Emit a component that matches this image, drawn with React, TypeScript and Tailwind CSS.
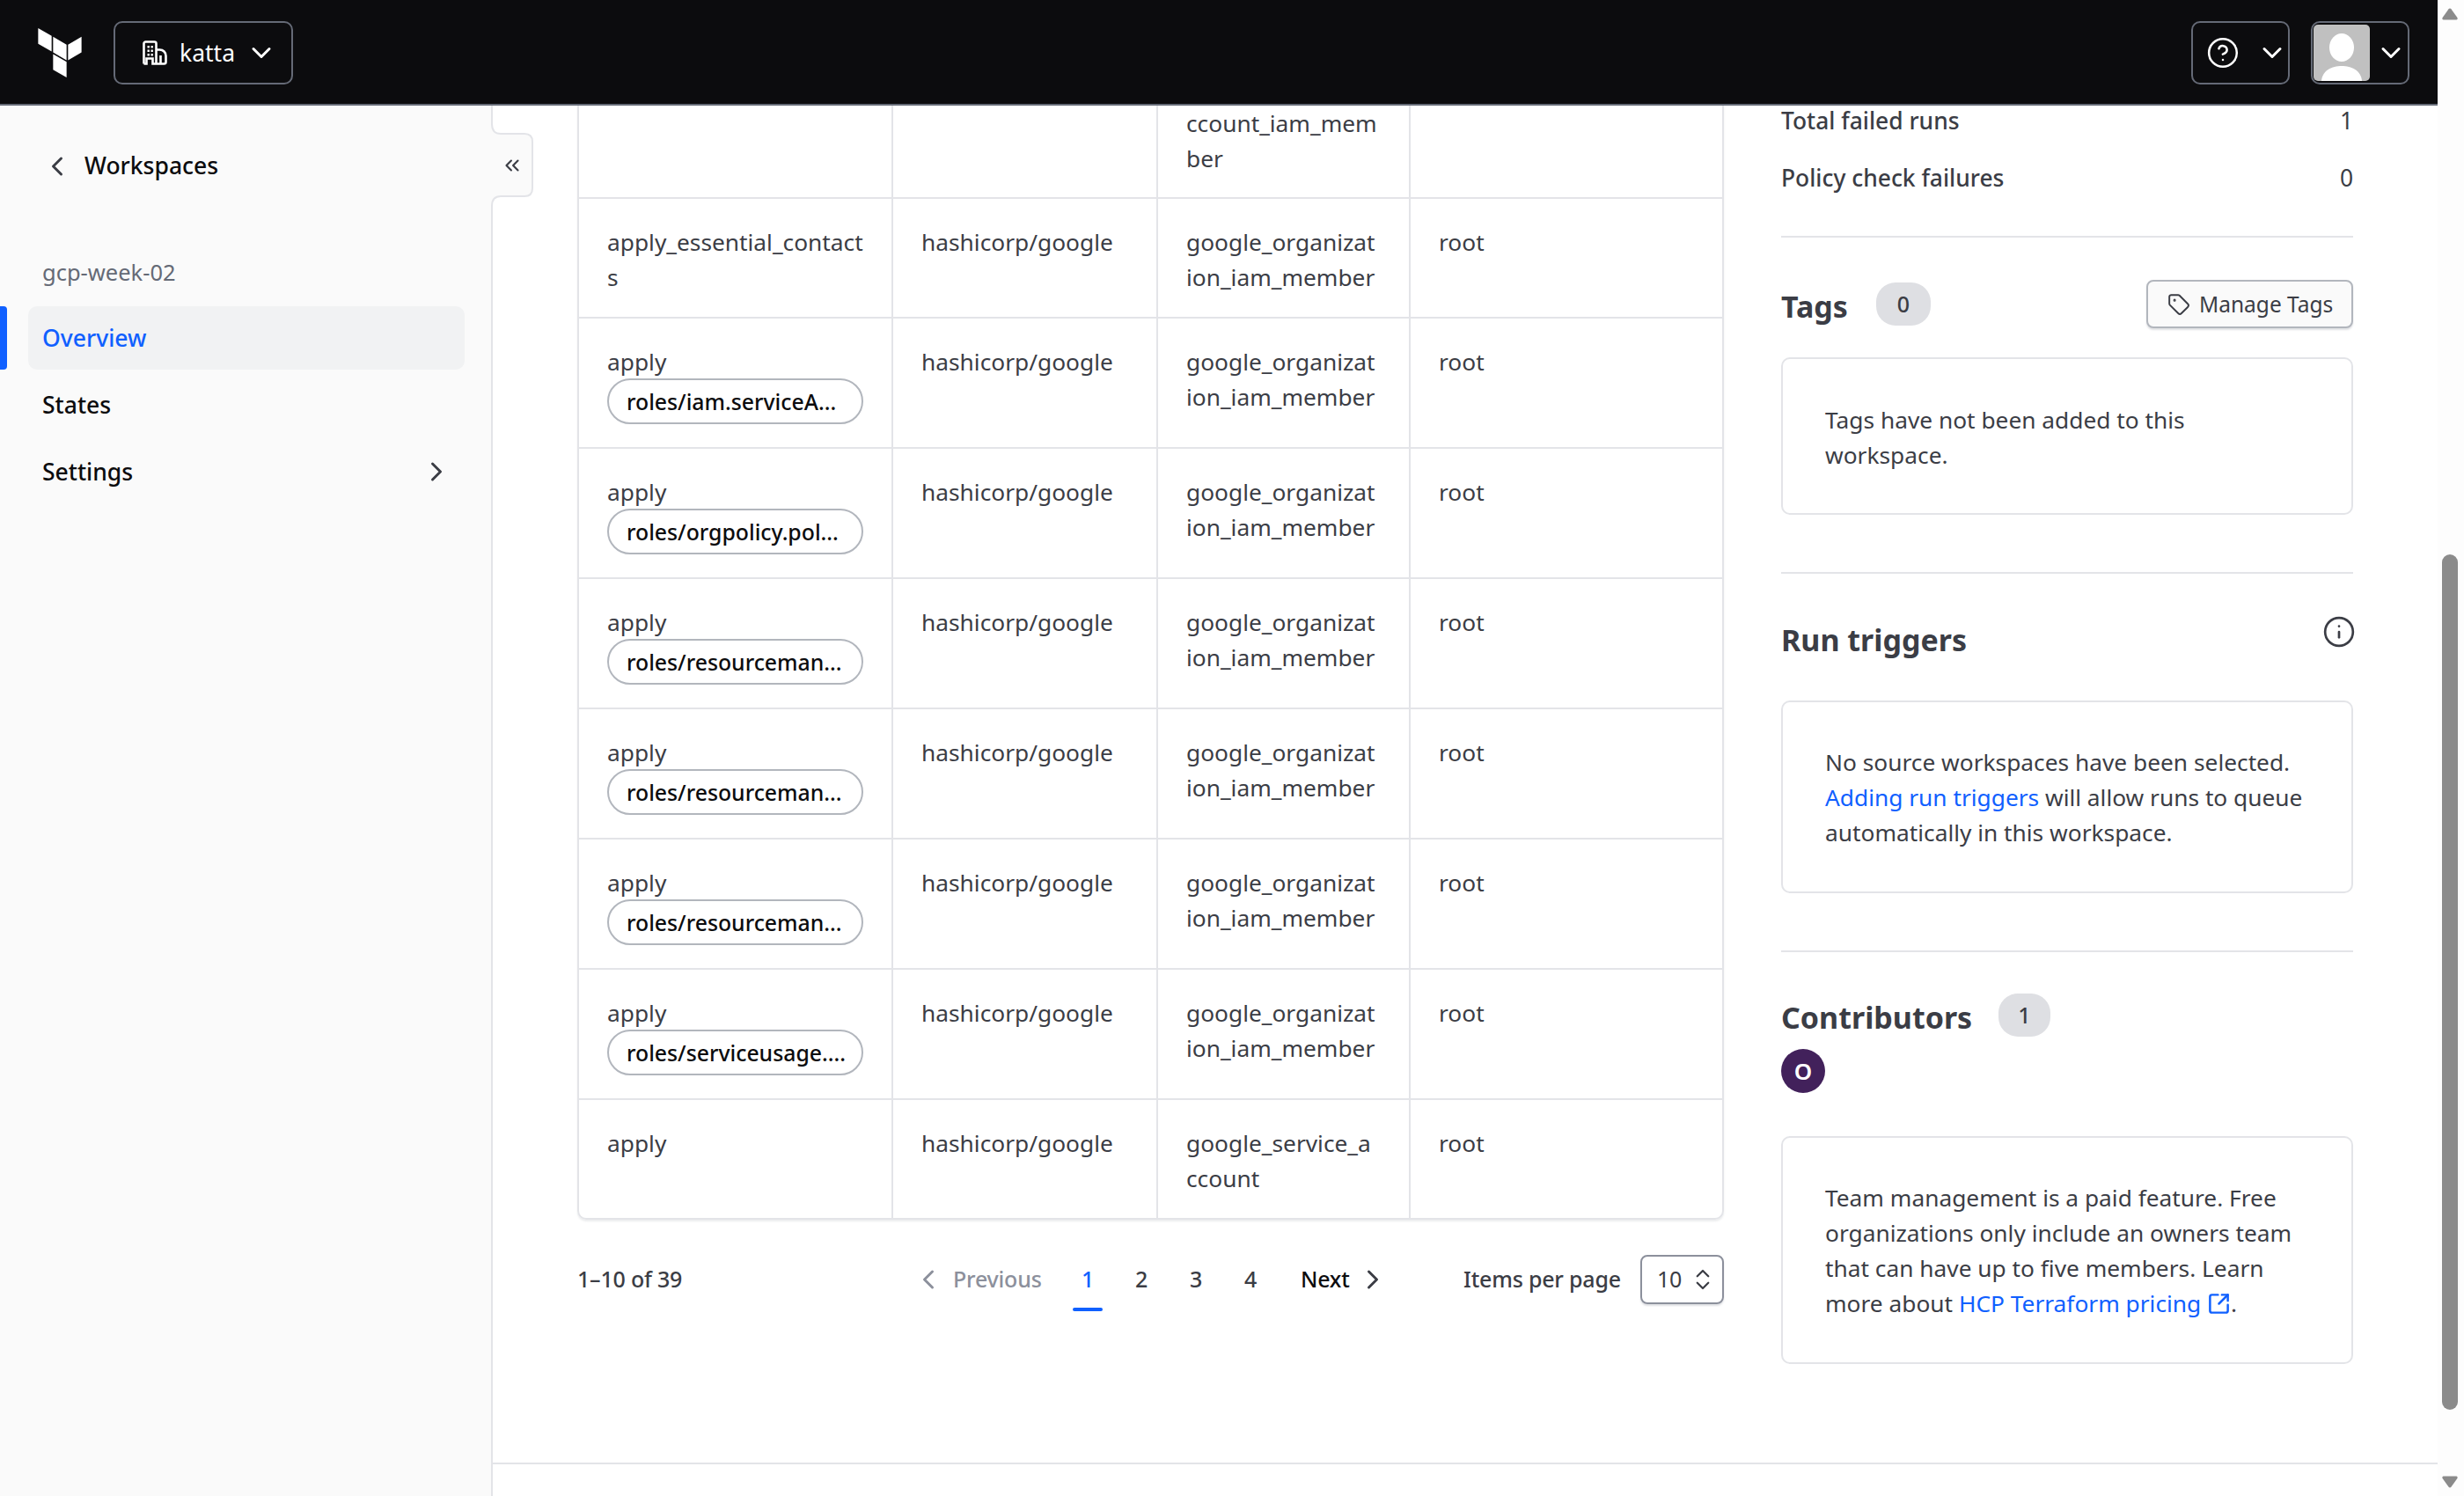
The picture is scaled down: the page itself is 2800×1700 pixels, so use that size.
import { ChevronsLeft, ChevronsUpDown, CircleHelp, Info, SquareArrowOutUpRight, Tag } from 'lucide-react';

type Row = { name: string; tag?: string; nameRest?: string; type: string[]; };

const rows: Row[] = [
  { name: 'apply_essential_contact', nameRest: 's', type: ['google_organizat', 'ion_iam_member'] },
  { name: 'apply', tag: 'roles/iam.serviceA...', type: ['google_organizat', 'ion_iam_member'] },
  { name: 'apply', tag: 'roles/orgpolicy.pol...', type: ['google_organizat', 'ion_iam_member'] },
  { name: 'apply', tag: 'roles/resourceman...', type: ['google_organizat', 'ion_iam_member'] },
  { name: 'apply', tag: 'roles/resourceman...', type: ['google_organizat', 'ion_iam_member'] },
  { name: 'apply', tag: 'roles/resourceman...', type: ['google_organizat', 'ion_iam_member'] },
  { name: 'apply', tag: 'roles/serviceusage....', type: ['google_organizat', 'ion_iam_member'] },
  { name: 'apply', type: ['google_service_a', 'ccount'] },
];

const chevrons = {
  down: 'M3.5 5.75 8 10.25l4.5-4.5',
  left: 'M10.25 3.5 5.75 8l4.5 4.5',
  right: 'M5.75 3.5 10.25 8l-4.5 4.5',
};

function Chevron({ dir, className }: { dir: keyof typeof chevrons; className?: string }) {
  return (
    <svg viewBox="0 0 16 16" fill="none" stroke="currentColor" strokeWidth="1.5" strokeLinecap="round" strokeLinejoin="round" className={className}>
      <path d={chevrons[dir]} />
    </svg>
  );
}

function Badge({ value, className }: { value: string; className: string }) {
  return (
    <span className={`flex h-[49px] items-center justify-center rounded-[22px] bg-[#dedfe3] text-[25px] font-medium text-[#3b3d45] ${className}`}>
      {value}
    </span>
  );
}

function Header() {
  return (
    <header className="flex h-[120px] items-center justify-between border-b-2 border-[#656a76] bg-[#0c0c0e] pl-[43px] pr-[32px] pt-[2px]">
      <div className="flex items-center">
        <svg viewBox="1.44 0 21.12 24" fill="#ffffff" className="h-[56px] w-[50px]">
          <path d="M1.44 0v7.575l6.561 3.79V3.787zm21.12 4.227l-6.561 3.791v7.574l6.56-3.787zM8.72 4.23v7.575l6.561 3.787V8.018zm0 8.405v7.575L15.28 24v-7.578z" />
        </svg>
        <button className="ml-[36px] flex h-[72px] w-[204px] items-center rounded-[10px] border-2 border-[#656a76] pl-[31px] text-white">
          <svg viewBox="0 0 28 28" fill="none" stroke="#ffffff" strokeWidth="2.6" className="h-[28px] w-[28px]">
            <path d="M1.5 26.5V3.5a2 2 0 0 1 2-2h10a2 2 0 0 1 2 2v23M1.5 26.5h3v-6h7v6h4M15.5 10.5h4c4 0 7 3 7 7v7a2 2 0 0 1-2 2h-9M20.5 26v-9" />
            <path stroke="none" fill="#ffffff" d="M5.5 6h2.4v2.4H5.5zM9.5 6h2.4v2.4H9.5zM5.5 10.5h2.4v2.4H5.5zM9.5 10.5h2.4v2.4H9.5zM5.5 15h2.4v2.4H5.5zM9.5 15h2.4v2.4H9.5z" />
          </svg>
          <span className="ml-[14px] w-[62px] text-[26.5px] leading-none">katta</span>
          <Chevron dir="down" className="ml-[15px] h-[32px] w-[32px]" />
        </button>
      </div>
      <div className="flex items-center gap-[24px]">
        <button className="flex h-[72px] w-[112px] items-center rounded-[10px] border-2 border-[#656a76] pl-[15px] text-white">
          <CircleHelp size={38} strokeWidth={1.6} />
          <Chevron dir="down" className="ml-[21px] h-[32px] w-[32px]" />
        </button>
        <button className="flex h-[72px] w-[112px] items-center rounded-[10px] border-2 border-[#656a76] pl-[1px] text-white">
          <svg viewBox="0 0 64 64" className="h-[64px] w-[64px] rounded-[5px]">
            <rect width="64" height="64" fill="#c0c0c0" />
            <ellipse cx="32" cy="26" rx="14" ry="16" fill="#ffffff" />
            <path d="M9 64c1-12 12-17 23-17s22 5 23 17z" fill="#ffffff" />
          </svg>
          <Chevron dir="down" className="ml-[8px] h-[32px] w-[32px]" />
        </button>
      </div>
    </header>
  );
}

function Sidebar() {
  return (
    <aside className="relative h-full w-[560px] shrink-0 bg-[#fafafa]">
      <div className="mt-[33px] flex h-[70px] items-center pl-[49px] pt-[1px]">
        <Chevron dir="left" className="h-[32px] w-[32px] text-[#3b3d45]" />
        <span className="ml-[15px] text-[26.5px] font-medium text-[#0c0c0e]">Workspaces</span>
      </div>
      <p className="mt-[66px] pl-[48px] text-[25.5px] leading-[40px] text-[#656a76]">gcp-week-02</p>
      <nav className="mt-[19px] flex flex-col gap-[4px] pl-[32px] pr-[32px]">
        <div className="relative flex h-[72px] items-center rounded-[10px] bg-[#f1f2f3] pl-[16px] pt-[2px] text-[26.5px] font-medium text-[#1060ff]">
          <span className="absolute left-[-32px] top-0 h-[72px] w-[8px] rounded-r-[4px] bg-[#1060ff]" />
          Overview
        </div>
        <div className="flex h-[72px] items-center pl-[16px] pt-[2px] text-[26.5px] font-medium text-[#0c0c0e]">States</div>
        <div className="flex h-[72px] items-center justify-between pl-[16px] pr-[16px] pt-[2px] text-[26.5px] font-medium text-[#0c0c0e]">
          Settings
          <Chevron dir="right" className="mt-[-2px] h-[32px] w-[32px] text-[#3b3d45]" />
        </div>
      </nav>
      {/* sidebar edge with the collapse tab */}
      <svg viewBox="0 0 50 1580" fill="none" className="absolute left-[557px] top-0 h-[1580px] w-[50px]">
        <path d="M2 0V21Q2 32 12 32H39Q48 32 48 41V94Q48 103 39 103H12Q2 103 2 114V1580H0V0Z" fill="#fafafa" />
        <path d="M2 0V21Q2 32 12 32H39Q48 32 48 41V94Q48 103 39 103H12Q2 103 2 114V1580" stroke="#e3e4e8" strokeWidth="2" />
      </svg>
      <ChevronsLeft size={26} strokeWidth={2} className="absolute left-[569px] top-[55px] text-[#3b3d45]" />
    </aside>
  );
}

function Cell({ children, last }: { children: React.ReactNode; last?: boolean }) {
  return <div className={`px-[32px] pb-[25px] pt-[29px] ${last ? '' : 'border-r-2 border-[#e3e4e8]'}`}>{children}</div>;
}

function ResourceTable() {
  return (
    <div className="w-[1303px] overflow-hidden rounded-b-[10px] border-x-2 border-b-2 border-[#e3e4e8] text-[26.3px] leading-[40px] text-[#3b3d45] shadow-[0_2px_2px_rgba(101,106,118,0.12)]">
      <div className="grid h-[106px] grid-cols-[357px_301px_287px_1fr] border-b-2 border-[#e3e4e8]">
        <div className="border-r-2 border-[#e3e4e8]" />
        <div className="border-r-2 border-[#e3e4e8]" />
        <div className="border-r-2 border-[#e3e4e8] px-[32px] whitespace-nowrap">ccount_iam_mem<br />ber</div>
        <div />
      </div>
      {rows.map((row, i) => (
        <div key={i} className={`grid grid-cols-[357px_301px_287px_1fr] ${i < rows.length - 1 ? 'border-b-2 border-[#e3e4e8]' : ''}`}>
          <Cell>
            <div className="whitespace-nowrap">{row.name}{row.nameRest && <><br />{row.nameRest}</>}</div>
            {row.tag && (
              <div className="mb-[1px] mt-[-1px] flex h-[52px] w-[291px] items-center rounded-full border-2 border-[#b2b6bd] px-[20px] text-[24.8px] font-medium leading-none whitespace-nowrap text-[#0c0c0e]">
                {row.tag}
              </div>
            )}
          </Cell>
          <Cell><span className="whitespace-nowrap">hashicorp/google</span></Cell>
          <Cell><div className="whitespace-nowrap">{row.type[0]}<br />{row.type[1]}</div></Cell>
          <Cell last>root</Cell>
        </div>
      ))}
    </div>
  );
}

function Pagination() {
  return (
    <div className="mt-[40px] flex h-[56px] w-[1303px] items-center text-[25px] tracking-[-0.2px] text-[#3b3d45]">
      <span className="w-[383px] font-medium">1–10 of 39</span>
      <Chevron dir="left" className="h-[32px] w-[32px] text-[#8c909c]" />
      <span className="ml-[12px] w-[136px] font-medium text-[#8c909c]">Previous</span>
      <div className="relative flex h-[56px] w-[34px] items-center justify-center font-medium text-[#1060ff]">
        1
        <span className="absolute bottom-[-8px] left-0 h-[4px] w-[34px] rounded-[2px] bg-[#1060ff]" />
      </div>
      <span className="ml-[13px] w-[62px] text-center font-medium">2</span>
      <span className="w-[62px] text-center font-medium">3</span>
      <span className="w-[62px] text-center font-medium">4</span>
      <span className="ml-[26px] w-[66px] font-medium text-[#0c0c0e]">Next</span>
      <Chevron dir="right" className="h-[32px] w-[32px] text-[#3b3d45]" />
      <span className="ml-[87px] w-[201px] font-medium">Items per page</span>
      <div className="flex h-[56px] w-[95px] items-center rounded-[8px] border-2 border-[#8c909c] pl-[17px] shadow-[0_2px_2px_rgba(101,106,118,0.2)]">
        10
        <ChevronsUpDown size={30} strokeWidth={1.8} className="ml-[9px] text-[#3b3d45]" />
      </div>
    </div>
  );
}

function InfoCard({ children, className }: { children: React.ReactNode; className: string }) {
  return (
    <div className={`rounded-[10px] border-2 border-[#e3e4e8] pl-[48px] text-[26.3px] leading-[40px] text-[#3b3d45] ${className}`}>
      {children}
    </div>
  );
}

function Details() {
  return (
    <aside className="ml-[65px] w-[650px] shrink-0 text-[#3b3d45]">
      <div className="flex h-[34px] items-center justify-between text-[26.4px] leading-none">
        <span className="font-medium">Total failed runs</span>
        <span>1</span>
      </div>
      <div className="mt-[29px] flex h-[40px] items-center justify-between text-[26.4px]">
        <span className="font-medium">Policy check failures</span>
        <span>0</span>
      </div>
      <div className="mt-[45px] border-t-2 border-[#e3e4e8]" />

      <div className="mt-[48px] flex h-[55px] items-center">
        <h2 className="mt-[6px] w-[76px] text-[34px] font-bold">Tags</h2>
        <Badge value="0" className="ml-[32px] w-[62px]" />
        <button className="ml-auto flex h-[55px] w-[235px] items-center rounded-[8px] border-2 border-[#b2b6bd] bg-[#fafafa] pl-[22px] text-[24.5px] shadow-[0_2px_2px_rgba(101,106,118,0.2)]">
          <Tag size={26} strokeWidth={1.8} />
          <span className="ml-[10px] pt-[2px]">Manage Tags</span>
        </button>
      </div>
      <InfoCard className="mt-[33px] pb-[46px] pt-[49px]">
        Tags have not been added to this<br />workspace.
      </InfoCard>
      <div className="mt-[65px] border-t-2 border-[#e3e4e8]" />

      <div className="mt-[52px] flex h-[50px] items-center justify-between">
        <h2 className="mt-[-4px] text-[34px] font-bold">Run triggers</h2>
        <Info size={38} strokeWidth={1.7} className="mr-[-3px] mt-[-22px]" />
      </div>
      <InfoCard className="mt-[42px] pb-[47px] pt-[48px]">
        No source workspaces have been selected.<br />
        <span className="text-[#1060ff]">Adding run triggers</span> will allow runs to queue<br />
        automatically in this workspace.
      </InfoCard>
      <div className="mt-[65px] border-t-2 border-[#e3e4e8]" />

      <div className="mt-[47px] flex h-[49px] items-center">
        <h2 className="mt-[6px] w-[215px] text-[34px] font-bold">Contributors</h2>
        <Badge value="1" className="ml-[32px] w-[59px]" />
      </div>
      <div className="mt-[14px] flex h-[50px] w-[50px] items-center justify-center rounded-full bg-[#42215b] text-[26px] font-semibold text-white">O</div>
      <InfoCard className="mt-[49px] pb-[47px] pt-[48px]">
        Team management is a paid feature. Free<br />
        organizations only include an owners team<br />
        that can have up to five members. Learn<br />
        more about <span className="text-[#1060ff]">HCP Terraform pricing <SquareArrowOutUpRight size={27} strokeWidth={2.2} className="inline align-[-4px]" /></span>.
      </InfoCard>
    </aside>
  );
}

function Scrollbar() {
  return (
    <div className="flex h-full w-[30px] shrink-0 flex-col items-center bg-[#fdfdfd] pr-[2px]">
      <svg viewBox="0 0 18 14" fill="#8b8b8b" className="mt-[9px] h-[14px] w-[18px]">
        <path d="M9 0.5c.6 0 1 .3 1.4.8l7 9.6c.6 1 .2 2.6-1.2 2.6H1.8C.4 13.5 0 11.9.6 10.9l7-9.6C8 .8 8.4.5 9 .5z" />
      </svg>
      <div className="mt-[607px] h-[972px] w-[18px] rounded-full bg-[#8b8b8b]" />
      <svg viewBox="0 0 18 14" fill="#8b8b8b" className="mt-[75px] h-[14px] w-[18px]">
        <path d="M9 13.5c.6 0 1-.3 1.4-.8l7-9.6c.6-1 .2-2.6-1.2-2.6H1.8C.4.5 0 2.1.6 3.1l7 9.6c.4.5.8.8 1.4.8z" />
      </svg>
    </div>
  );
}

export default function App() {
  return (
    <div className="flex h-[1700px] w-[2800px] overflow-hidden bg-white font-['Noto_Sans',sans-serif]">
      <div className="flex h-full w-[2770px] flex-col">
        <Header />
        <div className="relative flex h-[1580px]">
          <Sidebar />
          <main className="flex-1">
            <div className="flex h-[1542px] overflow-hidden pl-[96px]">
              <div>
                <ResourceTable />
                <Pagination />
              </div>
              <Details />
            </div>
            <div className="border-t-2 border-[#e3e4e8]" />
          </main>
        </div>
      </div>
      <Scrollbar />
    </div>
  );
}
